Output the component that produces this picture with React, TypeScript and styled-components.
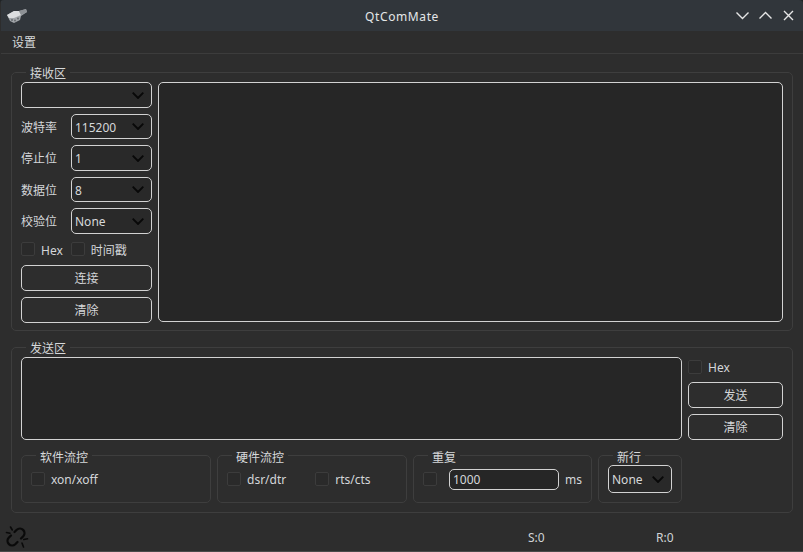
import React from 'react';
import styled, { createGlobalStyle } from 'styled-components';

const GlobalStyle = createGlobalStyle`
    html, body {
        margin: 0;
        padding: 0;
        background: #1f2326;
    }
    * {
        box-sizing: border-box;
    }
`;

const Window = styled.div`
    width: 803px;
    height: 552px;
    padding-left: 1px;
    display: flex;
    flex-direction: column;
    background: #2d2d2d;
    color: #d4d6d9;
    font-family: 'Noto Sans', 'Noto Sans CJK SC', sans-serif;
    font-size: 12px;
    line-height: 16px;
    border-radius: 4px 4px 0 0;
    overflow: hidden;
    border-bottom: 1px solid #4a4a4a;
`;

const Text = styled.span`
    padding-top: 2px;
`;

const RowText = styled.span`
    padding-top: 4px;
`;

const TitleBar = styled.div`
    height: 31px;
    flex: none;
    display: flex;
    align-items: center;
    padding: 0 8px 0 5px;
    background: #31363b;
    position: relative;
`;

const Title = styled.div`
    position: absolute;
    left: 0;
    right: 0;
    padding-top: 2px;
    text-align: center;
    letter-spacing: 0.6px;
    color: #e4e6e8;
`;

const TitleButtons = styled.div`
    margin-left: auto;
    display: flex;
    gap: 10px;
`;

const MenuBar = styled.div`
    height: 23px;
    flex: none;
    padding: 4px 0 0 11px;
    border-bottom: 1px solid #3c3c3c;
    color: #d6d8da;
`;

const Main = styled.div`
    flex: none;
    display: flex;
    flex-direction: column;
    gap: 16px;
    padding: 18px 10px 0 10px;
`;

const Group = styled.div<{ $height: number }>`
    position: relative;
    height: ${(props) => props.$height}px;
    border: 1px solid #3e3e3e;
    border-radius: 5px;
`;

const GroupTitle = styled.span`
    position: absolute;
    top: -6px;
    left: 14px;
    padding: 0 4px;
    background: #2d2d2d;
    color: #d6d8da;
    line-height: 14px;
`;

const ReceiveBody = styled.div`
    display: flex;
    gap: 6px;
    padding: 9px 9px 0 9px;
`;

const SidePanel = styled.div`
    width: 131px;
    flex: none;
    display: flex;
    flex-direction: column;
`;

const FieldRow = styled.div<{ $height: number }>`
    height: ${(props) => props.$height}px;
    margin-top: 6px;
    display: flex;
    align-items: center;
    justify-content: space-between;
`;

const Select = styled.div<{ $width?: number; $height?: number }>`
    width: ${(props) => (props.$width ? `${props.$width}px` : '100%')};
    height: ${(props) => props.$height ?? 26}px;
    flex: none;
    display: flex;
    align-items: center;
    justify-content: space-between;
    padding: 0 7px 0 3px;
    background: #292929;
    border: 1px solid #d2d2d2;
    border-radius: 5px;
    color: #d6d8da;
`;

const Box = styled.div`
    background: #262626;
    border: 1px solid #d2d2d2;
    border-radius: 5px;
`;

const ReceiveText = styled(Box)`
    flex: 1;
    height: 240px;
`;

const Button = styled.div`
    height: 26px;
    flex: none;
    display: flex;
    align-items: center;
    justify-content: center;
    background: #2d2d2d;
    border: 1px solid #d2d2d2;
    border-radius: 5px;
`;

const ButtonStack = styled.div`
    display: flex;
    flex-direction: column;
    gap: 6px;
`;

const CheckRow = styled.div`
    height: 20px;
    margin: 5px 0 6px;
    display: flex;
    align-items: center;
    gap: 8px;
`;

const Check = styled.label`
    display: flex;
    align-items: center;
    gap: 6px;
`;

const CheckBox = styled.span`
    width: 14px;
    height: 14px;
    flex: none;
    background: #2a2a2a;
    border: 1px solid #3c3c3c;
    border-radius: 2px;
`;

const SendBody = styled.div`
    display: flex;
    gap: 6px;
    padding: 9px 9px 0 9px;
`;

const SendText = styled(Box)`
    height: 83px;
    width: 661px;
    flex: none;
`;

const SendSide = styled.div`
    flex: 1;
    display: flex;
    flex-direction: column;
    gap: 6px;
`;

const SendCheck = styled.div`
    height: 19px;
    padding-top: 1px;
`;

const OptionRow = styled.div`
    display: flex;
    gap: 6px;
    margin: 15px 9px 0 9px;
`;

const SubGroup = styled.div<{ $width: number; $gap?: number }>`
    position: relative;
    width: ${(props) => props.$width}px;
    height: 48px;
    padding: 0 9px;
    display: flex;
    align-items: center;
    gap: ${(props) => props.$gap ?? 0}px;
    border: 1px solid #3e3e3e;
    border-radius: 5px;
`;

const SubTitle = styled.span`
    position: absolute;
    top: -5px;
    left: 14px;
    padding: 0 4px;
    background: #2d2d2d;
    color: #d6d8da;
    line-height: 14px;
`;

const RepeatInput = styled.div`
    width: 110px;
    height: 21px;
    margin-left: 12px;
    padding: 0 3px;
    display: flex;
    align-items: center;
    background: #262626;
    border: 1px solid #d2d2d2;
    border-radius: 5px;
`;

const Unit = styled(Text)`
    margin-left: 6px;
`;

const StatusBar = styled.div`
    flex: 1;
    display: flex;
    align-items: center;
    padding: 10px 0 0 4px;
    color: #d0d3d5;
`;

const Counter = styled(Text)<{ $width: number }>`
    width: ${(props) => props.$width}px;
    flex: none;
`;

const StatusSpacer = styled.div`
    width: 499px;
    flex: none;
`;

const Chevron = () => (
    <svg width="12" height="7" viewBox="0 0 12 7" fill="none" stroke="#080808" strokeWidth="1.9">
        <path d="M.7.7 6 6 11.3.7" />
    </svg>
);

const WinIcon = ({ d }: { d: string }) => (
    <svg width="13" height="13" viewBox="0 0 13 13" fill="none" stroke="#e6e6e6" strokeWidth="1.4">
        <path d={d} />
    </svg>
);

const PortIcon = () => (
    <svg width="22" height="16" viewBox="0 0 22 16">
        <path d="M1 7 8 3 13 3 20 1 21 4 15 8 14 12 8 15 4 13Z" fill="#a2a6aa" />
        <path d="M1 7 8 3 13 3 15 7 8 10 3 10Z" fill="#dcdee0" />
        <path d="M13 3 20 1 21 4 15 7Z" fill="#8d9195" />
        <circle cx="6" cy="12" r=".9" fill="#62666a" />
        <circle cx="9" cy="12.5" r=".9" fill="#62666a" />
        <circle cx="12" cy="10.5" r=".9" fill="#62666a" />
    </svg>
);

const BrokenLinkIcon = () => (
    <svg width="24" height="24" viewBox="0 0 24 24" fill="none" stroke="#0a0a0a" strokeWidth="2.3" strokeLinecap="round">
        <path d="M9.5 7 11.75 4.75A4.6 4.6 0 0 1 18.25 11.25L16 13.5" />
        <path d="M12.5 17 10.25 19.25A4.6 4.6 0 0 1 3.75 12.75L6 10.5" />
        <path d="M5.5 2 7.3 5M1.5 7.5 5 8.2M18.5 22 17 18M22.5 13.8 18.8 14.5" strokeWidth="1.6" />
    </svg>
);

const fields = [
    { label: '波特率', value: '115200', height: 25 },
    { label: '停止位', value: '1', height: 26 },
    { label: '数据位', value: '8', height: 25 },
    { label: '校验位', value: 'None', height: 26 },
];

export default function App() {
    return (
        <Window>
            <GlobalStyle />
            <TitleBar>
                <PortIcon />
                <Title>QtComMate</Title>
                <TitleButtons>
                    <WinIcon d="M.5 3.5 6.5 9.5 12.5 3.5" />
                    <WinIcon d="M.5 9.5 6.5 3.5 12.5 9.5" />
                    <WinIcon d="M2 2 11 11M11 2 2 11" />
                </TitleButtons>
            </TitleBar>
            <MenuBar>设置</MenuBar>
            <Main>
                <Group $height={259}>
                    <GroupTitle>接收区</GroupTitle>
                    <ReceiveBody>
                        <SidePanel>
                            <Select>
                                <span />
                                <Chevron />
                            </Select>
                            {fields.map((field) => (
                                <FieldRow key={field.label} $height={field.height}>
                                    <Text>{field.label}</Text>
                                    <Select $width={81} $height={field.height}>
                                        <Text>{field.value}</Text>
                                        <Chevron />
                                    </Select>
                                </FieldRow>
                            ))}
                            <CheckRow>
                                <Check>
                                    <CheckBox />
                                    <RowText>Hex</RowText>
                                </Check>
                                <Check>
                                    <CheckBox />
                                    <RowText>时间戳</RowText>
                                </Check>
                            </CheckRow>
                            <ButtonStack>
                                <Button>
                                    <Text>连接</Text>
                                </Button>
                                <Button>
                                    <Text>清除</Text>
                                </Button>
                            </ButtonStack>
                        </SidePanel>
                        <ReceiveText />
                    </ReceiveBody>
                </Group>
                <Group $height={166}>
                    <GroupTitle>发送区</GroupTitle>
                    <SendBody>
                        <SendText />
                        <SendSide>
                            <SendCheck>
                                <Check>
                                    <CheckBox />
                                    <Text>Hex</Text>
                                </Check>
                            </SendCheck>
                            <Button>
                                <Text>发送</Text>
                            </Button>
                            <Button>
                                <Text>清除</Text>
                            </Button>
                        </SendSide>
                    </SendBody>
                    <OptionRow>
                        <SubGroup $width={190}>
                            <SubTitle>软件流控</SubTitle>
                            <Check>
                                <CheckBox />
                                <Text>xon/xoff</Text>
                            </Check>
                        </SubGroup>
                        <SubGroup $width={190} $gap={29}>
                            <SubTitle>硬件流控</SubTitle>
                            <Check>
                                <CheckBox />
                                <Text>dsr/dtr</Text>
                            </Check>
                            <Check>
                                <CheckBox />
                                <Text>rts/cts</Text>
                            </Check>
                        </SubGroup>
                        <SubGroup $width={179}>
                            <SubTitle>重复</SubTitle>
                            <CheckBox />
                            <RepeatInput>
                                <Text>1000</Text>
                            </RepeatInput>
                            <Unit>ms</Unit>
                        </SubGroup>
                        <SubGroup $width={84}>
                            <SubTitle>新行</SubTitle>
                            <Select $width={64} $height={28}>
                                <Text>None</Text>
                                <Chevron />
                            </Select>
                        </SubGroup>
                    </OptionRow>
                </Group>
            </Main>
            <StatusBar>
                <BrokenLinkIcon />
                <StatusSpacer />
                <Counter $width={128}>S:0</Counter>
                <Counter $width={40}>R:0</Counter>
            </StatusBar>
        </Window>
    );
}
